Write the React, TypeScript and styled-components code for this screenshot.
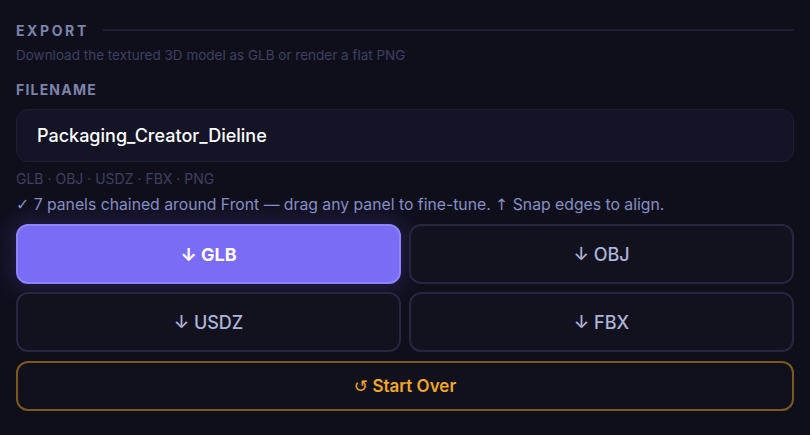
import React from 'react';
import styled, { createGlobalStyle } from 'styled-components';

const GlobalStyle = createGlobalStyle`
  html, body {
    margin: 0;
    padding: 0;
    background: #0f0f1c;
  }
  body {
    font-family: Inter, "Noto Sans", "Liberation Sans", sans-serif;
    -webkit-font-smoothing: antialiased;
  }
`

const Panel = styled.section`
  width: 810px;
  height: 435px;
  box-sizing: border-box;
  padding: 20px 16px 0 16px;
  display: flex;
  flex-direction: column;
  background: #0f0f1c;
`

const SectionHead = styled.div`
  display: flex;
  align-items: center;
  gap: 14px;
  height: 20px;

  h2 {
    margin: 0;
    font-size: 14px;
    font-weight: 700;
    letter-spacing: 2.6px;
    color: #7c83ab;
  }

  hr {
    flex: 1;
    margin: 0;
    border: none;
    height: 2px;
    background: #1e1f34;
  }
`

const Hint = styled.p<{ $tone?: 'dim' | 'soft' }>`
  margin: 0;
  font-size: ${p => (p.$tone === 'soft' ? '15.75px' : '13.5px')};
  line-height: 18px;
  color: ${p => (p.$tone === 'soft' ? '#8790c2' : '#3d415f')};
`

const Description = styled(Hint)`
  margin-top: 6px;
`

const Label = styled.label`
  display: block;
  margin-top: 17px;
  font-size: 14px;
  font-weight: 700;
  letter-spacing: 1.2px;
  color: #7c83ab;
`

const Input = styled.input`
  margin-top: 11px;
  height: 53px;
  box-sizing: border-box;
  width: 100%;
  padding: 0 20px;
  border-radius: 12px;
  border: 1px solid #1d1e33;
  background: #131426;
  color: #ffffff;
  font-family: inherit;
  font-size: 18px;
  font-weight: 500;
  outline: none;
`

const Formats = styled(Hint)`
  margin-top: 8px;
  font-size: 14px;
`

const Status = styled(Hint)`
  margin-top: 8px;
`

/* thin symbol glyphs (check, arrows) come from a wider fallback face */
const Glyph = styled.span`
  font-family: "DejaVu Sans", sans-serif;
  font-weight: 400;
`

const Grid = styled.div`
  margin-top: 10px;
  display: grid;
  grid-template-columns: 1fr 1fr;
  gap: 8px;
`

const ExportButton = styled.button<{ $primary?: boolean }>`
  height: 60px;
  border-radius: 12px;
  font-family: inherit;
  font-size: 18px;
  font-weight: ${p => (p.$primary ? 700 : 500)};
  cursor: pointer;
  border: 2px solid ${p => (p.$primary ? '#8e84ff' : '#26263e')};
  background: ${p => (p.$primary ? '#7b6cf6' : '#12121f')};
  color: ${p => (p.$primary ? '#ffffff' : '#aeb4d8')};
  box-shadow: ${p => (p.$primary ? '0 0 22px 4px rgba(110, 96, 240, 0.22)' : 'none')};
`

const ResetButton = styled.button`
  margin-top: 9px;
  height: 50px;
  border-radius: 12px;
  border: 2px solid #7a5a1c;
  background: #11111d;
  color: #f2a72a;
  font-family: inherit;
  font-size: 17px;
  font-weight: 600;
  cursor: pointer;
`

const formats = ['GLB', 'OBJ', 'USDZ', 'FBX'];

export default function App() {
  return (
    <>
      <GlobalStyle />
      <Panel>
        <SectionHead>
          <h2>EXPORT</h2>
          <hr />
        </SectionHead>
        <Description>Download the textured 3D model as GLB or render a flat PNG</Description>
        <Label htmlFor="filename">FILENAME</Label>
        <Input id="filename" defaultValue="Packaging_Creator_Dieline" />
        <Formats>GLB · OBJ · USDZ · FBX · PNG</Formats>
        <Status $tone="soft">
          <Glyph>✓</Glyph> 7 panels chained around Front — drag any panel to fine-tune. <Glyph>↑</Glyph> Snap edges to align.
        </Status>
        <Grid>
          {formats.map((f, i) => (
            <ExportButton key={f} $primary={i === 0}>↓ {f}</ExportButton>
          ))}
        </Grid>
        <ResetButton><Glyph>↺</Glyph> Start Over</ResetButton>
      </Panel>
    </>
  );
}
